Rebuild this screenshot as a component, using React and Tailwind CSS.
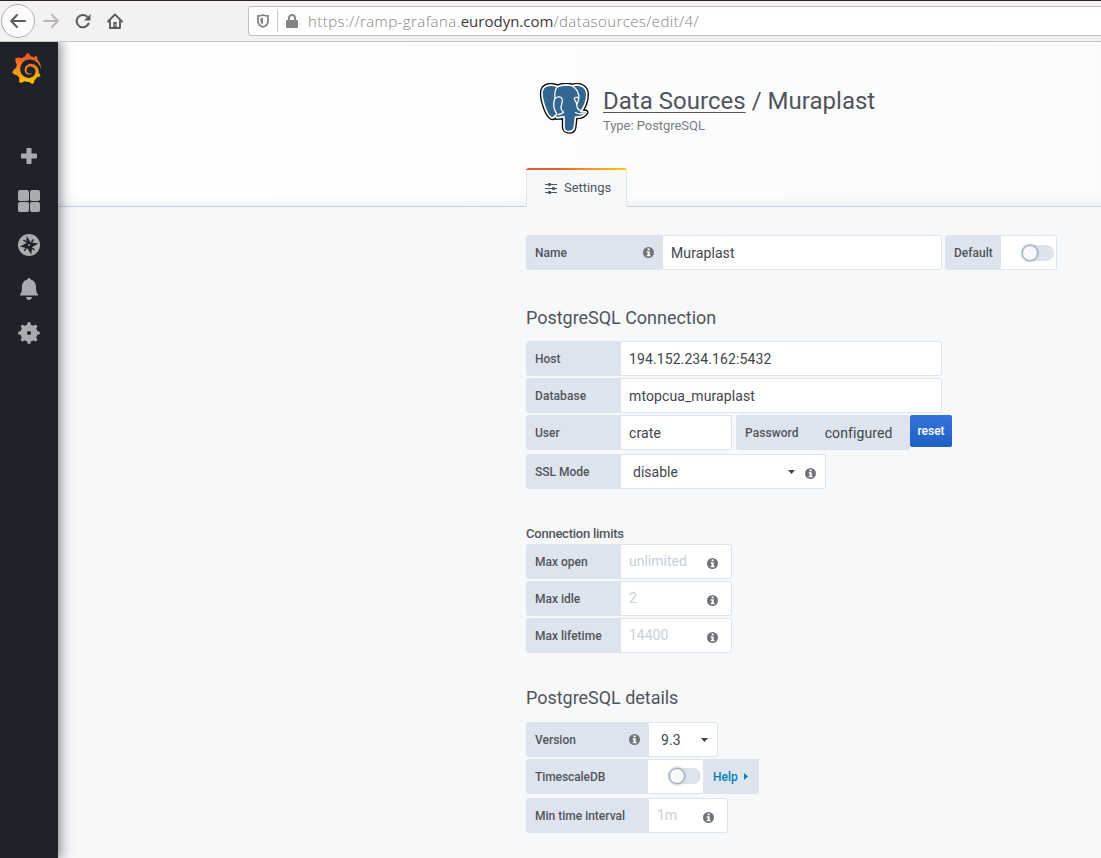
import React from "react";
import { SiGrafana } from "react-icons/si";

function Info({ className = "" }) {
  return (
    <svg className={`h-[11px] w-[11px] shrink-0 ${className}`} viewBox="0 0 11 11">
      <circle cx="5.5" cy="5.5" r="5.5" fill="#70737a" />
      <path d="M4.600 1.500h2.100v1.700H4.600zM3.700 4.300h3v3.600h.9v1.300H3.700V7.900h.9V5.600h-.9z" fill="#fff" />
    </svg>
  );
}

function Label({ className = "", children }) {
  return (
    <div className={`flex h-[35px] shrink-0 items-center rounded-l-[3px] bg-[#dde4ed] pl-[9px] text-[12px] font-medium text-[#52545c] ${className}`}>
      {children}
    </div>
  );
}

function Field({ className = "", children }) {
  return (
    <div className={`flex h-[35px] shrink-0 items-center rounded-r-[3px] border border-l-0 border-[#dde4ed] bg-white pl-2 text-[14px] text-[#41444b] ${className}`}>
      {children}
    </div>
  );
}

function Value({ className = "", children }) {
  return <span className={`pt-[2px] tracking-[0.1px] ${className}`}>{children}</span>;
}

function Caret() {
  return (
    <svg className="mt-px h-1 w-[7px] shrink-0" viewBox="0 0 7 4">
      <path d="M0 0h7L3.5 4z" fill="#41444b" />
    </svg>
  );
}

function Toggle({ className = "" }) {
  return (
    <div className={`flex h-4 w-8 shrink-0 items-center rounded-full bg-[#dde4ed] ${className}`}>
      <div className="h-4 w-4 rounded-full border border-[#a3a9b3] bg-[#f7f8fa] shadow-[0_0_2px_1px_#b9c0ca]" />
    </div>
  );
}

function Elephant() {
  const body =
    "M18.500 3.600C14 1.500 7.500 1.500 4.500 5 1.500 9 3.500 17 5.500 23c1.500 5 4 9.500 6.500 11.500 1.500 1 3 .3 4.500-1.500l1.200 1.800 7.300-1V44.500c.6 5.500 9.200 5.500 10.300 0L36.500 34c4.500.3 8.500-.8 10.800-4.500.3-1.300-2.800-.6-5.300-1 4-6 6.500-14 5.500-20C45.500 2.500 38.500.800 33.500 2.800c-5-1.400-10.500-1.200-15 .8z";
  return (
    <svg className="-ml-px h-[52px] w-[51px] shrink-0" viewBox="0 0 51 52" strokeLinejoin="round" strokeLinecap="round">
      <path d={body} stroke="#0a0a0a" strokeWidth="4.400" fill="#0a0a0a" />
      <path d={body} fill="#336791" stroke="#fff" strokeWidth="1.700" />
      <g fill="none" stroke="#fff" strokeWidth="1.300">
        <path d="M18.500 3.600C15.500 7 15.500 11 16 15c-1.500 4-2 8-.2 12 .5 1.500 2 3 2 4.500-1.500.5-2 2-3.500 3" />
        <path d="M16 15.300c3-2.500 7-1.500 7.300 1.500.4 3-1.300 5-1.300 8 0 2 1 3 2.500 4.500-1.500 1.500-3 2.200-5 2.200" />
        <path d="M33.500 2.800c4 3 6.500 8 6.300 12.500-.3 3-2 5-2 7.500 0 3 2 4 4.200 5.700M39.800 15c-1.500-1-4-.8-4.500.5.2 2.500 3 3.500 2.500 7.300M36.500 29.500c2 1.500 5 1.600 8 .7" />
      </g>
    </svg>
  );
}

function BrowserBar() {
  return (
    <div className="flex h-[42px] shrink-0 items-center border-t border-b border-t-[#2b2528] border-b-[#c6c4c3] bg-[#f4f2f1]">
      <div className="ml-px flex h-[34px] w-[34px] items-center justify-center rounded-full border border-[#b1afae] bg-[#fbfbfb]">
        <svg className="h-4 w-4" viewBox="0 0 16 16" fill="none" stroke="#5b5b5a" strokeWidth="2" strokeLinecap="round" strokeLinejoin="round">
          <path d="M15 8H1.500M7 2 1.200 8 7 14" />
        </svg>
      </div>
      <svg className="ml-2 h-4 w-4" viewBox="0 0 16 16" fill="none" stroke="#b9b7b6" strokeWidth="2" strokeLinecap="round" strokeLinejoin="round">
        <path d="M1 8h13.500M9 2l5.800 6L9 14" />
      </svg>
      <svg className="ml-4 h-4 w-4" viewBox="0 0 16 16" fill="none" stroke="#5b5b5a" strokeWidth="2" strokeLinecap="round">
        <path d="M13.600 10.500A6.200 6.200 0 1 1 12 3.500" />
        <path d="M15.500 1v6.500H9z" fill="#5b5b5a" stroke="none" />
      </svg>
      <svg className="ml-4 h-4 w-4" viewBox="0 0 16 16" fill="none" stroke="#5b5b5a" strokeWidth="1.900" strokeLinejoin="round" strokeLinecap="round">
        <path d="M1 8.500 8 1.500l7 7M3 8v7h10V8" />
        <path d="M6.300 15V9h3.400v6z" fill="#5b5b5a" stroke="none" />
        <path d="M8.200 11.500v.7" stroke="#f4f2f1" strokeWidth="1" />
      </svg>
      <div className="ml-[125px] flex h-[30px] flex-1 items-center rounded-l-[4px] border border-r-0 border-[#c5c0bd] bg-white">
        <svg className="ml-2 h-[14px] w-3" viewBox="0 0 12 14">
          <path d="M6 1c2 .8 3.500 1 5 1v5c0 3-2 5-5 6-3-1-5-3-5-6V2c1.500 0 3-.2 5-1z" fill="none" stroke="#858584" strokeWidth="1.800" />
          <path d="M6 3.600v7C4.300 9.700 3.400 8.500 3.400 7V4.200z" fill="#858584" />
        </svg>
        <div className="ml-2 h-[22px] w-px bg-[#c9c9c9]" />
        <svg className="ml-2 h-[14px] w-3" viewBox="0 0 12 14">
          <path d="M3 7V4a3 3 0 0 1 6 0v3" fill="none" stroke="#858584" strokeWidth="1.900" />
          <rect y="6" width="12" height="8" rx="1.200" fill="#858584" />
        </svg>
        <div className="ml-[10px] font-['Open_Sans',sans-serif] text-[15px] font-light tracking-[0.42px] whitespace-nowrap text-[#858585]">
          https://ramp-grafana.<span className="tracking-[0.01px] font-normal text-[#3a3a3a]">eurodyn.com</span>/datasources/edit/4/
        </div>
      </div>
    </div>
  );
}

function Sidebar() {
  return (
    <div className="relative z-10 flex w-[58px] shrink-0 flex-col items-center bg-[#1f2229] text-[#a9abaf] shadow-[0_0_12px_2px_rgba(40,44,54,0.6)]">
      <svg className="h-0 w-0" aria-hidden="true">
        <defs>
          <linearGradient id="flame" x1="0" y1="0" x2="0" y2="1">
            <stop offset="0.15" stopColor="#f05a28" />
            <stop offset="1" stopColor="#fbca0a" />
          </linearGradient>
        </defs>
      </svg>
      <SiGrafana className="mt-[11px] -ml-[5px] h-[31px] w-[31px]" fill="url(#flame)" />
      <svg className="mt-[64px] h-4 w-4" viewBox="0 0 16 16" fill="currentColor">
        <path d="M5.500 1c0-.6.4-1 1-1h3c.6 0 1 .4 1 1v4.500H15c.6 0 1 .4 1 1v3c0 .6-.4 1-1 1h-4.500V15c0 .6-.4 1-1 1h-3c-.6 0-1-.4-1-1v-4.500H1c-.6 0-1-.4-1-1v-3c0-.6.400-1 1-1h4.500z" />
      </svg>
      <div className="mt-[26px] grid h-[22px] w-[22px] grid-cols-2 gap-px">
        <div className="rounded-[2px] bg-[#a9abaf]" />
        <div className="rounded-[2px] bg-[#a9abaf]" />
        <div className="rounded-[2px] bg-[#a9abaf]" />
        <div className="rounded-[2px] bg-[#a9abaf]" />
      </div>
      <svg className="mt-[22px] h-[22px] w-[22px]" viewBox="0 0 22 22">
        <circle cx="11" cy="11" r="11" fill="#a9abaf" />
        <path d="m8.700 2 3.900 6.300 7.700 1.200-6.100 3.600-1 7.400-3.700-6.100-7.500-2 6.200-3.200z" fill="#1f2229" />
        <path d="m5.500 6.200 2.500 1.800M16.500 16l-2.400-2M15.500 5.500l-2 2.400M6.300 16.700l1.900-2.600" stroke="#1f2229" strokeWidth="1.500" />
        <circle cx="11" cy="11" r="1" fill="#a9abaf" />
      </svg>
      <svg className="mt-[22px] h-[22px] w-[18px]" viewBox="0 0 18 22" fill="currentColor">
        <path d="M9 0c.9 0 1.600.6 1.600 1.600C14.500 2.500 16 6 16 9c0 4 .5 6 2 7.500v1H0v-1C1.500 15 2 13 2 9c0-3 1.500-6.500 5.400-7.400C7.400.6 8.100 0 9 0zM6 19h6c-.3 2-1.500 3-3 3s-2.700-1-3-3z" />
      </svg>
      <svg className="mt-[22px] h-[22px] w-[22px]" viewBox="0 0 22 22">
        <circle cx="11" cy="11" r="8.600" fill="#a9abaf" />
        <g stroke="#a9abaf" strokeWidth="3.600" strokeLinecap="round">
          <path d="M11 1.800v18.400M1.800 11h18.400M4.600 4.600l12.800 12.800M17.400 4.600 4.600 17.400" />
        </g>
        <circle cx="11" cy="11" r="2.100" fill="#1f2229" />
      </svg>
    </div>
  );
}

export default function App() {
  return (
    <div className="flex h-[858px] w-[1101px] flex-col overflow-hidden bg-[#f7f8fa] font-['Roboto',sans-serif] text-[#52545c]">
      <BrowserBar />
      <div className="flex min-h-0 flex-1 overflow-hidden">
        <Sidebar />
        <div className="min-w-0 flex-1">
          <div className="flex h-[165px] flex-col border-b border-[#c5d0dd] bg-gradient-to-r from-white to-[#fafbfc] pl-[468px] shadow-[inset_0_-10px_12px_-9px_#e6eaf0]">
            <div className="mt-[41px] flex h-[54px] items-start pl-[14px]">
              <Elephant />
              <div className="ml-[13px]">
                <div className="mt-1 text-[24px] leading-7 tracking-[0.02px] whitespace-nowrap"><span className="underline decoration-1 underline-offset-[3px]">Data Sources</span> / Muraplast</div>
                <div className="mt-[3px] text-[13px] leading-4 tracking-[-0.05px] text-[#7b7d85]">Type: PostgreSQL</div>
              </div>
            </div>
            <div className="mt-[31px] -mb-px flex h-[39px] w-[101px] shrink-0 flex-col overflow-hidden rounded-t-[3px] bg-[#f7f8fa]">
              <div className="h-[2px] shrink-0 bg-gradient-to-r from-[#f05a28] from-30% to-[#fbca0a]" />
              <div className="flex flex-1 items-center border-x border-[#dde4ed] pb-[2px] pl-[18px] text-[13px] tracking-[-0.05px]">
                <svg className="mt-px mr-[7px] h-[11px] w-3" viewBox="0 0 12 11" stroke="#52545c" strokeWidth="1.200">
                  <path d="M0 1.500h12M0 5.500h12M0 9.500h12" />
                  <path d="M4.500 0v3M8.500 4v3M4.500 8v3" strokeWidth="2.500" />
                </svg>
                Settings
              </div>
            </div>
          </div>
          <div className="flex flex-col pt-[28px] pl-[468px]">
            <div className="flex">
              <Label className="w-[137px] justify-between pr-[9px]">Name<Info /></Label>
              <Field className="w-[279px]"><Value>Muraplast</Value></Field>
              <Label className="ml-[3px] w-14">Default</Label>
              <Field className="w-14"><Toggle className="ml-[13px]" /></Field>
            </div>
            <h3 className="mt-[36px] text-[18px] leading-6 tracking-[-0.03px]">PostgreSQL Connection</h3>
            <div className="mt-[11px] flex flex-col gap-[2px]">
              <div className="flex">
                <Label className="w-[95px]">Host</Label>
                <Field className="w-[321px]"><Value>194.152.234.162:5432</Value></Field>
              </div>
              <div className="flex">
                <Label className="w-[95px] tracking-[0.08px]">Database</Label>
                <Field className="w-[321px]"><Value>mtopcua_muraplast</Value></Field>
              </div>
              <div className="flex">
                <Label className="w-[95px]">User</Label>
                <Field className="w-[111px]"><Value>crate</Value></Field>
                <Label className="ml-1 w-[174px] rounded-r-[3px] tracking-[0.08px]">
                  Password<Value className="ml-[26px] text-[14px] font-normal text-[#41444b]">configured</Value>
                </Label>
                <button className="h-8 w-[42px] rounded-[2px] bg-gradient-to-b from-[#3274d9] to-[#1f60c4] text-[12px] font-medium text-white">reset</button>
              </div>
            </div>
            <div className="mt-1 flex">
              <Label className="w-[95px]">SSL Mode</Label>
              <Field className="w-[205px] pl-3">
                <Value className="w-[155px] tracking-normal">disable</Value><Caret /><Info className="mt-[3px] ml-[10px]" />
              </Field>
            </div>
            <h6 className="mt-[36px] text-[13px] leading-[17px] font-medium tracking-[-0.24px]">Connection limits</h6>
            <div className="mt-[2px] flex flex-col gap-[2px]">
              {[["Max open", "unlimited"], ["Max idle", "2"], ["Max lifetime", "14400"]].map(([name, hint]) => (
                <div className="flex" key={name}>
                  <Label className="w-[95px]">{name}</Label>
                  <Field className="w-[111px] justify-between pr-[13px]">
                    <span className="text-[#c7d0d9]">{hint}</span><Info className="mt-1" />
                  </Field>
                </div>
              ))}
            </div>
            <h3 className="mt-[33px] text-[18px] leading-6 tracking-[-0.03px]">PostgreSQL details</h3>
            <div className="mt-[12px] flex">
              <Label className="w-[123px] justify-between pr-[9px]">Version<Info /></Label>
              <Field className="w-[69px] justify-between pr-[9px] pl-3"><Value>9.3</Value><Caret /></Field>
            </div>
            <div className="mt-[2px] flex">
              <Label className="w-[122px] tracking-[-0.08px]">TimescaleDB</Label>
              <Field className="w-[56px]"><Toggle className="mb-px ml-[13px]" /></Field>
              <div className="-ml-px flex h-[35px] w-14 items-center rounded-l-[3px] bg-[#dde4ed] pl-[10px] text-[12px] font-medium text-[#0083b3]">
                Help
                <svg className="ml-[6px] h-[7px] w-1" viewBox="0 0 4 7"><path d="M0 0v7l4-3.500z" fill="#0083b3" /></svg>
              </div>
            </div>
            <div className="mt-1 flex">
              <Label className="w-[123px]">Min time interval</Label>
              <Field className="w-[79px] justify-between pr-[13px]">
                <span className="text-[#c7d0d9]">1m</span><Info className="mt-1" />
              </Field>
            </div>
          </div>
        </div>
      </div>
    </div>
  );
}
